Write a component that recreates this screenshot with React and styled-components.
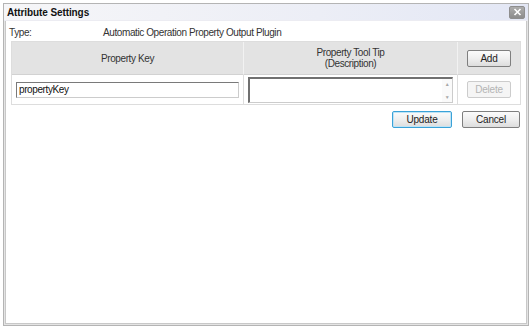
import React from "react";
import styled, { createGlobalStyle } from "styled-components";

const Global = createGlobalStyle`
  html, body { margin: 0; padding: 0; background: #fff; }
  body { font-family: "Liberation Sans", Arial, sans-serif; font-size: 10px; letter-spacing: -0.4px; color: #333; }
`;

const Dialog = styled.div`
  box-sizing: border-box;
  margin: 3px 0 0 3px;
  width: 526px;
  height: 323px;
  border: 1px solid #b4b4b4;
  box-shadow: inset 0 0 0 1px #e4e4e4, inset 0 0 0 2px #c8c8c8;
  display: flex;
  flex-direction: column;
  padding: 0 2px 2px 2px;
  background: #fff;
`;

const TitleBar = styled.div`
  display: flex;
  align-items: center;
  justify-content: space-between;
  height: 16px;
  margin: 0 -2px;
  padding: 0 3px 0 3px;
  background: linear-gradient(to right, #f6f6f8 0%, #eceef6 60%, #e3e7f5 100%);
  border-bottom: 1px solid #ececf2;
`;

const Title = styled.span`
  font-weight: bold;
  font-size: 10px;
  letter-spacing: -0.1px;
  color: #111;
`;

const CloseButton = styled.button`
  box-sizing: border-box;
  width: 16px;
  height: 13px;
  padding: 0;
  border: 1px solid #8e8e8e;
  border-radius: 2px;
  background: linear-gradient(#adadad, #8c8c8c);
  display: flex;
  align-items: center;
  justify-content: center;
`;

const Body = styled.div`
  padding: 4px 3px 0 3px;
  display: flex;
  flex-direction: column;
`;

const TypeRow = styled.div`
  display: flex;
  height: 14px;
  align-items: center;
  margin-bottom: 2px;
`;

const TypeLabel = styled.span`
  width: 94px;
`;

const Table = styled.div`
  margin: 0 2px;
  display: grid;
  grid-template-columns: 232px 214px 1fr;
  border: 1px solid #dddddd;
`;

const HeadCell = styled.div`
  height: 32px;
  background: #e3e3e3;
  border-right: ${(p) => (p.$last ? "none" : "1px solid #f2f2f2")};
  border-bottom: 1px solid #d2d2d2;
  display: flex;
  flex-direction: column;
  align-items: center;
  justify-content: center;
  text-align: center;
  line-height: 11px;
`;

const Cell = styled.div`
  height: 29px;
  border-right: ${(p) => (p.$last ? "none" : "1px solid #dddddd")};
  display: flex;
  align-items: center;
  justify-content: ${(p) => (p.$center ? "center" : "flex-start")};
  padding: 0 ${(p) => (p.$center ? "0" : "4px")};
`;

const TextInput = styled.input`
  box-sizing: border-box;
  width: 223px;
  height: 16px;
  font-family: "Liberation Sans", Arial, sans-serif;
  font-size: 10px;
  letter-spacing: -0.4px;
  padding: 0 2px;
  color: #111;
  border: 1px solid #cccccc;
  border-top-color: #7a7a7a;
  border-left-color: #7a7a7a;
  outline: none;
`;

const AreaWrap = styled.div`
  box-sizing: border-box;
  width: 206px;
  height: 26px;
  border: 1px solid #cccccc;
  border-top: 2px solid #707070;
  border-left: 2px solid #707070;
  display: flex;
`;

const Area = styled.div`
  flex: 1;
`;

const ScrollBar = styled.div`
  width: 10px;
  display: flex;
  flex-direction: column;
  justify-content: space-between;
  align-items: center;
  padding: 2px 0;
  color: #a8a8a8;
  font-size: 5px;
  line-height: 6px;
  background: #fafafa;
`;

const Button = styled.button`
  box-sizing: border-box;
  width: ${(p) => p.$w || 44}px;
  height: 17px;
  padding: 0;
  font-family: "Liberation Sans", Arial, sans-serif;
  font-size: 10px;
  letter-spacing: -0.2px;
  color: ${(p) => (p.disabled ? "#b4b4b4" : "#222")};
  border: 1px solid ${(p) => (p.$primary ? "#3aa2d8" : p.disabled ? "#cccccc" : "#7f7f7f")};
  border-radius: 2px;
  background: ${(p) =>
    p.disabled ? "#f5f5f5" : "linear-gradient(#fbfbfb 0%, #efefef 50%, #dddddd 100%)"};
  box-shadow: ${(p) => (p.$primary ? "inset 0 0 0 1px #bfe3f5" : "none")};
`;

const Actions = styled.div`
  display: flex;
  justify-content: flex-end;
  gap: 10px;
  margin: 6px 3px 0 0;
`;

export default function App() {
  return (
    <>
      <Global />
      <Dialog>
        <TitleBar>
          <Title>Attribute Settings</Title>
          <CloseButton aria-label="close">
            <svg width="9" height="8" viewBox="0 0 9 8">
              <path d="M1.5 1 L7.5 7 M7.5 1 L1.5 7" stroke="#fff" strokeWidth="1.6" />
            </svg>
          </CloseButton>
        </TitleBar>
        <Body>
          <TypeRow>
            <TypeLabel>Type:</TypeLabel>
            <span>Automatic Operation Property Output Plugin</span>
          </TypeRow>
          <Table>
            <HeadCell>Property Key</HeadCell>
            <HeadCell>
              <span>Property Tool Tip</span>
              <span>(Description)</span>
            </HeadCell>
            <HeadCell $last>
              <Button $w={44}>Add</Button>
            </HeadCell>
            <Cell>
              <TextInput defaultValue="propertyKey" />
            </Cell>
            <Cell>
              <AreaWrap>
                <Area />
                <ScrollBar>
                  <span>▲</span>
                  <span>▼</span>
                </ScrollBar>
              </AreaWrap>
            </Cell>
            <Cell $last $center>
              <Button $w={44} disabled>Delete</Button>
            </Cell>
          </Table>
          <Actions>
            <Button $primary $w={60}>Update</Button>
            <Button $w={58}>Cancel</Button>
          </Actions>
        </Body>
      </Dialog>
    </>
  );
}
